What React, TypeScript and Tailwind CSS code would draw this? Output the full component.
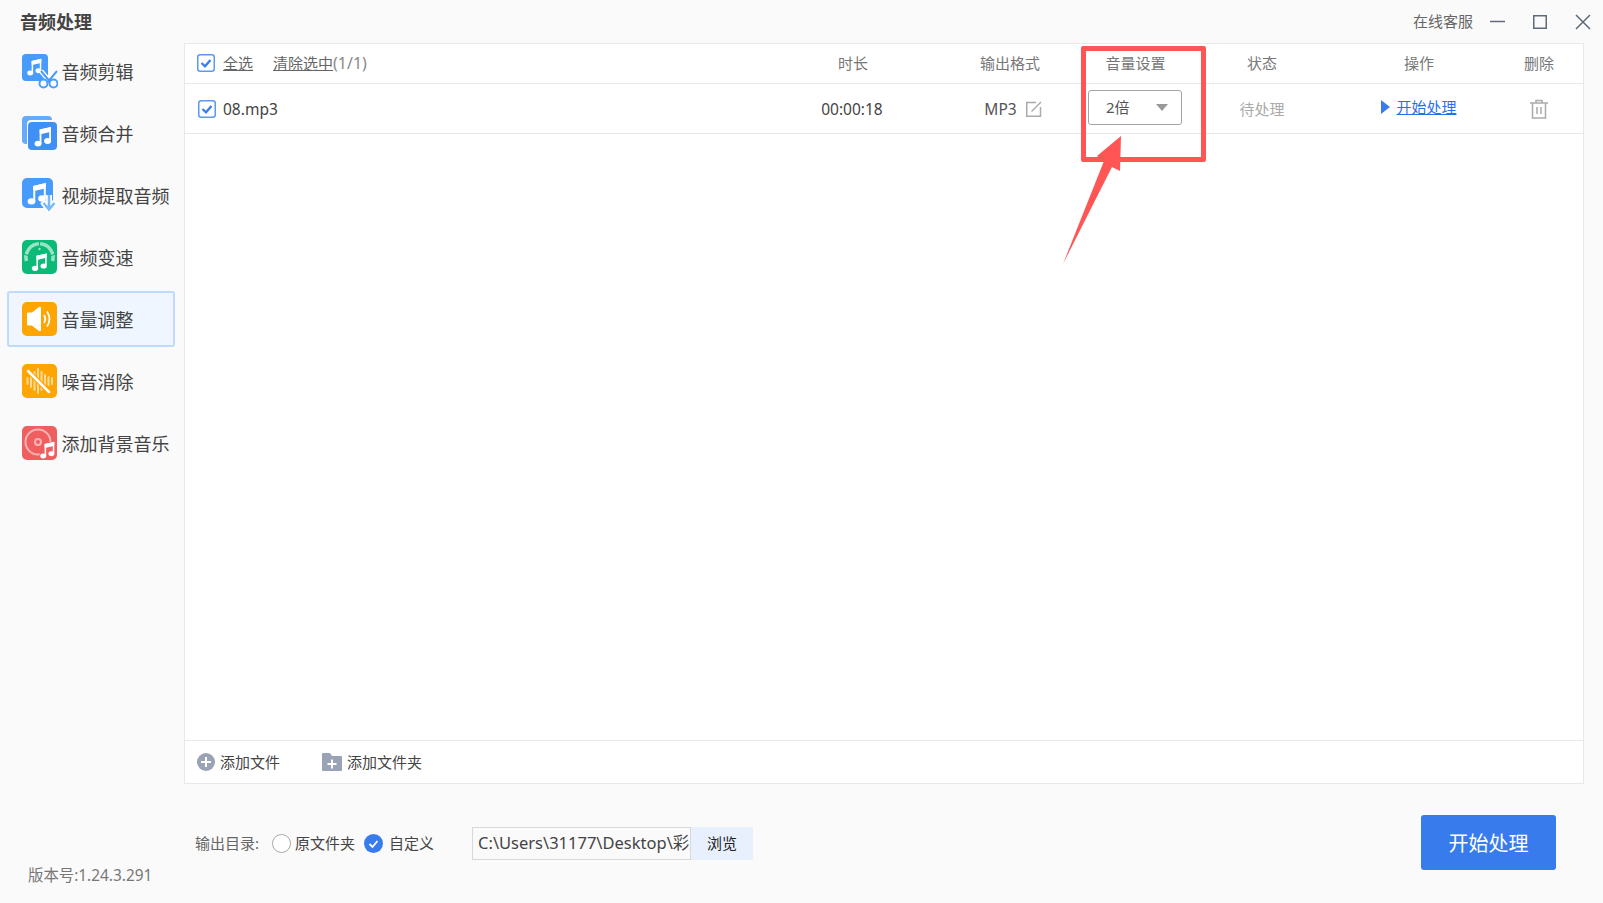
import React from 'react';

const Note = ({ x, y, s = 1, color = 'white' }: { x: number; y: number; s?: number; color?: string }) => (
    <g transform={`translate(${x} ${y}) scale(${s})`} fill={color}>
        <path d="M6.6 3.6 18 1v13h-1.8V6.2L8.4 8v9.5H6.6z" />
        <path d="M6.6 3.6 18 1v4L6.6 7.6z" />
        <ellipse cx="5" cy="17.6" rx="3.5" ry="2.9" />
        <ellipse cx="14.6" cy="15" rx="3.5" ry="2.9" />
    </g>
);

const IconCut = () => (
    <svg width="36" height="36" viewBox="0 0 36 36">
        <rect x="0" y="1" width="26" height="27" rx="4" fill="#479bfb" />
        <Note x={4} y={5} s={0.85} />
        <path d="M19 18 30 31M35 18 24 31" stroke="white" strokeWidth="5" />
        <path d="M19 18 30 31M35 18 24 31" stroke="#4a9dfb" strokeWidth="2" />
        <circle cx="21.5" cy="30.5" r="4" fill="white" stroke="#4a9dfb" strokeWidth="2" />
        <circle cx="31.5" cy="30.5" r="4" fill="white" stroke="#4a9dfb" strokeWidth="2" />
    </svg>
);

const IconMerge = () => (
    <svg width="36" height="36" viewBox="0 0 36 36">
        <path d="M4 1h22a4 4 0 0 1 4 4H9a4 4 0 0 0-4 4v20H4a4 4 0 0 1-4-3V5a4 4 0 0 1 4-4z" fill="#66aafc" />
        <rect x="6" y="7" width="29" height="28" rx="4" fill="#3f8ff5" />
        <Note x={11} y={11} s={1} />
    </svg>
);

const IconExtract = () => (
    <svg width="36" height="36" viewBox="0 0 36 36">
        <rect x="0" y="1" width="31" height="30" rx="5" fill="#479bfb" />
        <Note x={4} y={5} s={1.1} />
        <path d="M27 18v12M20.5 24.5 27 33l6.5-8.500" fill="none" stroke="white" strokeWidth="6" />
        <path d="M27 18v13M21.500 26 27 32.500 32.500 26" fill="none" stroke="#7ab8fc" strokeWidth="2.500" />
    </svg>
);

const IconSpeed = () => (
    <svg width="36" height="36" viewBox="0 0 36 36">
        <rect x="0" y="1" width="35" height="34" rx="5" fill="#0cba78" />
        <path d="M4.500 22a13.500 13.500 0 1 1 26 0" fill="none" stroke="#9be3c6" strokeWidth="3.500" />
        <path d="M17.500 3v5M2 15l5 2M33 15l-5 2" stroke="#0cba78" strokeWidth="1.200" />
        <circle cx="17.500" cy="10" r="1.200" fill="#9be3c6" />
        <Note x={8.500} y={13.500} s={0.9} />
    </svg>
);

const IconVolume = () => (
    <svg width="36" height="36" viewBox="0 0 36 36">
        <rect x="0" y="1" width="35" height="34" rx="5" fill="#ffa502" />
        <path d="M5 12.500q0-1 1-1h4L17 6q2-1 2 1v22q0 2-2 1l-7-5.500H6q-1 0-1-1z" fill="white" />
        <path d="M22 14q2.500 4 0 8" fill="none" stroke="white" strokeWidth="1.800" />
        <path d="M25 10.500q5 7.500 0 15" fill="none" stroke="white" strokeWidth="1.800" />
    </svg>
);

const IconNoise = () => (
    <svg width="36" height="36" viewBox="0 0 36 36">
        <rect x="0" y="1" width="35" height="34" rx="5" fill="#ffa502" />
        <path d="M5.500 15v6M9 12v12M12.500 9v18M16 6v24M19.500 9v18M23 12v14M26.500 14v8M30 15v6" stroke="#ffd99a" strokeWidth="2" strokeLinecap="round" />
        <path d="M6 8 27 29" stroke="#ffa502" strokeWidth="5" />
        <path d="M6 8 27 29" stroke="white" strokeWidth="2.500" strokeLinecap="round" />
    </svg>
);

const IconMusic = () => (
    <svg width="36" height="36" viewBox="0 0 36 36">
        <rect x="0" y="1" width="35" height="34" rx="5" fill="#ef5f5f" />
        <circle cx="16" cy="17" r="12.500" fill="none" stroke="#f9b5b5" strokeWidth="2" />
        <circle cx="16" cy="17" r="3" fill="none" stroke="#f9b5b5" strokeWidth="2" />
        <g>
            <path d="M17 32 21 18 33 16 33 33 17 35z" fill="#ef5f5f" />
            <Note x={17} y={16} s={0.85} />
        </g>
    </svg>
);

const Checkbox = () => (
    <svg width="18" height="18" viewBox="0 0 18 18" className="shrink-0">
        <rect x="0.75" y="0.75" width="16.500" height="16.500" rx="2.500" fill="white" stroke="#5a9af2" strokeWidth="1.500" />
        <path d="M4.500 9 8 12.300 13.500 6" fill="none" stroke="#3b7fec" strokeWidth="2.400" />
    </svg>
);

const menuItems = [
    { label: '音频剪辑', icon: <IconCut /> },
    { label: '音频合并', icon: <IconMerge /> },
    { label: '视频提取音频', icon: <IconExtract /> },
    { label: '音频变速', icon: <IconSpeed /> },
    { label: '音量调整', icon: <IconVolume />, active: true },
    { label: '噪音消除', icon: <IconNoise /> },
    { label: '添加背景音乐', icon: <IconMusic /> },
];

const App: React.FC = () => {
    return (
        <div className="relative w-[1603px] h-[903px] overflow-hidden flex flex-col bg-[#fafafa] font-['Noto_Sans','Noto_Sans_CJK_SC',sans-serif]">
            {/* Title bar */}
            <div className="h-[43px] shrink-0 flex items-center pl-[20px] pr-[12px]">
                <span className="text-[18px] leading-[24px] font-bold text-[#444]">音频处理</span>
                <span className="ml-auto pb-[2px] text-[15px] leading-[20px] text-[#666]">在线客服</span>
                <svg width="15" height="15" viewBox="0 0 15 15" className="ml-[17px]">
                    <path d="M0 7.500h15" stroke="#5f6b7a" strokeWidth="1.500" />
                </svg>
                <svg width="14" height="14" viewBox="0 0 14 14" className="ml-[28px]">
                    <rect x="0.750" y="0.750" width="12.500" height="12.500" fill="none" stroke="#5f6b7a" strokeWidth="1.500" />
                </svg>
                <svg width="16" height="16" viewBox="0 0 16 16" className="ml-[28px]">
                    <path d="M1 1l14 14M15 1 1 15" stroke="#5f6b7a" strokeWidth="1.500" />
                </svg>
            </div>

            <div className="flex flex-1 min-h-0">
                {/* Sidebar */}
                <div className="w-[184px] shrink-0 flex flex-col">
                    <div className="flex flex-col gap-[6px] pl-[7px]">
                        {menuItems.map((item) => (
                            <div
                                key={item.label}
                                className={
                                    item.active
                                        ? 'h-[56px] w-[168px] flex items-center gap-[3.500px] pl-[13px] rounded-[3px] border-2 border-[#c0dafd] bg-[#eff6ff]'
                                        : 'h-[56px] w-[168px] flex items-center gap-[3.500px] pl-[13px] border-2 border-transparent'
                                }
                            >
                                <span className="w-[36px] h-[36px] shrink-0">{item.icon}</span>
                                <span className="pt-[1px] text-[18px] leading-[24px] text-[#444] whitespace-nowrap">{item.label}</span>
                            </div>
                        ))}
                    </div>
                    <div className="mt-auto pl-[28px] pb-[17px] text-[15.400px] leading-[20px] text-[#777]">版本号:1.24.3.291</div>
                </div>

                <div className="flex-1 flex flex-col min-w-0">
                    {/* File table */}
                    <div className="h-[741px] mr-[19px] shrink-0 flex flex-col bg-white border border-[#e8e8e8]">
                        <div className="h-[40px] shrink-0 flex items-center pb-[2px] border-b border-[#e8e8e8] text-[15px] leading-[20px] text-[#777]">
                            <div className="flex-1 flex items-center pl-[12px]">
                                <Checkbox />
                                <span className="ml-[8px] underline text-[#666]">全选</span>
                                <span className="ml-[20px] underline text-[#666]">清除选中</span>
                                <span className="text-[16px] text-[#888]">(1/1)</span>
                            </div>
                            <div className="w-[162px] text-center">时长</div>
                            <div className="w-[152px] text-center">输出格式</div>
                            <div className="w-[98px] pl-[1px] text-center">音量设置</div>
                            <div className="w-[156px] text-center">状态</div>
                            <div className="w-[158px] text-center">操作</div>
                            <div className="w-[85px] pr-[3px] text-center">删除</div>
                        </div>
                        <div className="h-[50px] shrink-0 flex items-center border-b border-[#e8e8e8]">
                            <div className="flex-1 flex items-center pl-[13px]">
                                <Checkbox />
                                <span className="ml-[7px] text-[15.500px] leading-[20px] text-[#444]">08.mp3</span>
                            </div>
                            <div className="w-[162px] pr-[2px] text-center text-[15.500px] leading-[20px] text-[#444]">00:00:18</div>
                            <div className="w-[152px] flex items-center justify-center gap-[9px] pl-[6px]">
                                <span className="text-[15.500px] leading-[20px] text-[#555]">MP3</span>
                                <svg width="16" height="16" viewBox="0 0 16 16">
                                    <path d="M10 1.500H.750v13.750h13.750V6" fill="none" stroke="#aaa" strokeWidth="1.500" />
                                    <path d="M5.500 10.500 15 1" stroke="#aaa" strokeWidth="1.500" />
                                </svg>
                            </div>
                            <div className="w-[98px] pl-[2px]">
                                <div className="w-[94px] h-[35px] -mt-[3px] flex items-center pl-[17px] pr-[13px] rounded-[3px] border border-[#a5a5a5]">
                                    <span className="text-[15px] leading-[20px] text-[#555]">2倍</span>
                                    <span className="ml-auto w-0 h-0 border-x-[6.500px] border-x-transparent border-t-[7px] border-t-[#999]" />
                                </div>
                            </div>
                            <div className="w-[156px] text-center text-[15px] leading-[20px] text-[#aaa]">待处理</div>
                            <div className="w-[158px] -mt-[4px] flex items-center justify-center gap-[6px]">
                                <span className="w-0 h-0 border-y-[7px] border-y-transparent border-l-[9px] border-l-[#3b7cec]" />
                                <span className="text-[15px] leading-[20px] text-[#2b6fe8] underline">开始处理</span>
                            </div>
                            <div className="w-[85px] pr-[3px] flex justify-center">
                                <svg width="20" height="20" viewBox="0 0 20 20">
                                    <path d="M1 4h18M7 4V1.500h6V4" fill="none" stroke="#aaa" strokeWidth="1.500" />
                                    <path d="M3.500 4v15h13V4M8 8v7M12 8v7" fill="none" stroke="#aaa" strokeWidth="1.500" />
                                </svg>
                            </div>
                        </div>
                        <div className="flex-1" />
                        <div className="h-[43px] shrink-0 flex items-center pl-[12px] border-t border-[#e8e8e8] text-[15px] leading-[20px] text-[#444]">
                            <svg width="18" height="18" viewBox="0 0 18 18">
                                <circle cx="9" cy="9" r="9" fill="#9aa3b5" />
                                <path d="M9 4v10M4 9h10" stroke="white" strokeWidth="2" />
                            </svg>
                            <span className="ml-[5px]">添加文件</span>
                            <svg width="20" height="18" viewBox="0 0 20 18" className="ml-[42px]">
                                <path d="M0 1q0-1 1-1h7l2 3h9q1 0 1 1v13q0 1-1 1H1q-1 0-1-1z" fill="#9aa3b5" />
                                <path d="M10 6.500v9M5.500 11h9" stroke="white" strokeWidth="2" />
                            </svg>
                            <span className="ml-[5px]">添加文件夹</span>
                        </div>
                    </div>

                    {/* Output settings */}
                    <div className="flex-1 flex items-center pl-[11px] pr-[47px] pb-[1px] text-[15px] leading-[20px]">
                        <span className="text-[#666] w-[77px] shrink-0">输出目录:</span>
                        <span className="w-[19px] h-[19px] shrink-0 rounded-full border border-[#a8a8a8] bg-white" />
                        <span className="ml-[4px] text-[#444]">原文件夹</span>
                        <svg width="19" height="19" viewBox="0 0 19 19" className="ml-[9px]">
                            <circle cx="9.500" cy="9.500" r="9.500" fill="#377bec" />
                            <path d="M5.500 10 8.500 13l5-6" fill="none" stroke="white" strokeWidth="1.800" />
                        </svg>
                        <span className="ml-[6px] text-[#444]">自定义</span>
                        <div className="ml-[38px] h-[33px] flex">
                            <div className="w-[219px] border border-[#d8d8d8] pl-[5px] flex items-center overflow-hidden whitespace-nowrap text-[16.500px] text-[#444]">C:\Users\31177\Desktop\彩虹</div>
                            <div className="w-[62px] bg-[#e8f0fd] flex items-center justify-center text-[#222]">浏览</div>
                        </div>
                        <button className="ml-auto w-[135px] h-[55px] -mt-[1px] pt-[3px] rounded-[3px] bg-[#377bec] text-white text-[20px] leading-[28px]">开始处理</button>
                    </div>
                </div>
            </div>

            {/* Red annotation over the volume column */}
            <div className="absolute left-[1081px] top-[46px] w-[125px] h-[116px] rounded-[2px] border-[5px] border-[#ff5555]" />
            <svg width="80" height="140" viewBox="0 0 80 140" className="absolute left-[1055px] top-[130px]">
                <path d="M66 6 65 41 57 37 8 134 49 31 42 26z" fill="#ff5555" />
            </svg>
        </div>
    );
};

export default App;
